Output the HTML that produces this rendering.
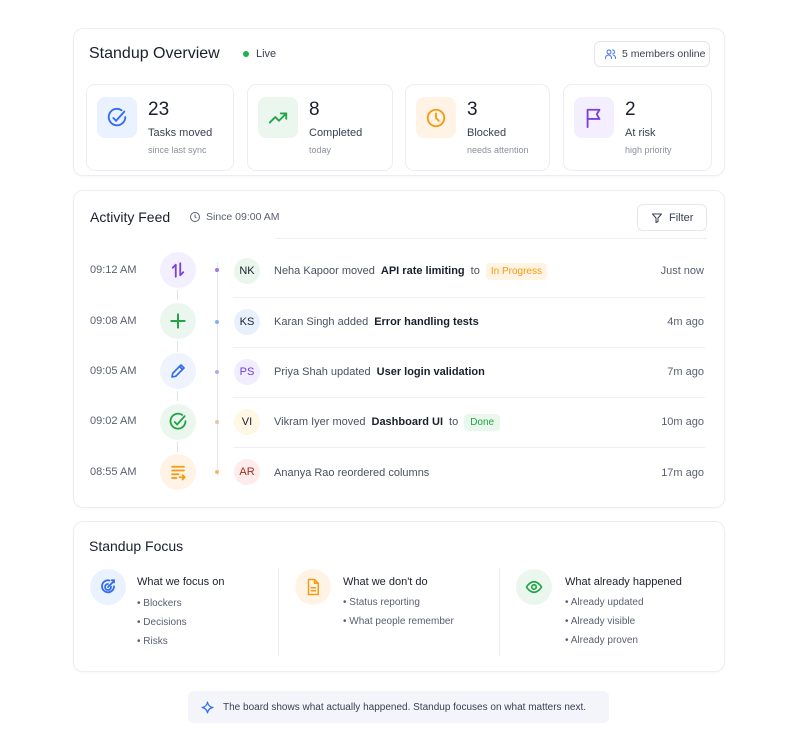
<!DOCTYPE html>
<html><head><meta charset="utf-8"><style>
*{box-sizing:border-box;margin:0;padding:0}
body{width:800px;height:751px;background:#fff;font-family:"Liberation Sans",sans-serif;color:#1f2433;position:relative;overflow:hidden}
.a{position:absolute}
.card{position:absolute;border:1px solid #eceef3;border-radius:10px;background:#fff;box-shadow:0 1px 2px rgba(20,30,60,.03)}
.stat{position:absolute;top:84px;height:87px;border:1px solid #eceef3;border-radius:9px}
.ib{position:absolute;left:10px;top:12px;width:40px;height:41px;border-radius:8px;display:flex;align-items:center;justify-content:center}
.num{position:absolute;left:61px;top:14px;font-size:19px;color:#1a1f2c}
.lbl{position:absolute;left:61px;top:42px;font-size:11px;color:#3a4050}
.sub{position:absolute;left:61px;top:60px;font-size:9px;color:#8a90a0}
.time{position:absolute;left:90px;font-size:11px;color:#5a6070}
.ic{position:absolute;left:160px;width:36px;height:36px;border-radius:50%;display:flex;align-items:center;justify-content:center}
.dot{position:absolute;left:215px;width:4px;height:4px;border-radius:50%}
.av{position:absolute;left:234px;width:26px;height:26px;border-radius:50%;font-size:11px;display:flex;align-items:center;justify-content:center}
.tx{position:absolute;left:274px;font-size:11px;color:#4a5060;white-space:nowrap;display:flex;align-items:center;gap:6px;height:20px}
.tx b{color:#1a1f2c;font-weight:bold}
.rt{position:absolute;right:96px;font-size:11px;color:#5a6070}
.sep{position:absolute;left:233px;width:472px;height:1px;background:#eef0f4}
.vl{position:absolute;left:177px;width:1px;height:10px;background:#dfe2e8}
.fh{position:absolute;font-size:11px;color:#1a1f2c}
.fl{position:absolute;font-size:10px;color:#5a6070}
.fi{position:absolute;width:36px;height:36px;border-radius:50%;display:flex;align-items:center;justify-content:center}
</style></head><body>

<div class="card" style="left:73px;top:28px;width:652px;height:148px"></div>
<div class="a" style="left:89px;top:45px;font-size:16px;color:#1a1f2c">Standup Overview</div>
<div class="a" style="left:243px;top:51px;width:6px;height:6px;border-radius:50%;background:#22b04b"></div>
<div class="a" style="left:256px;top:48px;font-size:11px;color:#3a4050">Live</div>
<div class="a" style="left:594px;top:41px;width:116px;height:26px;border:1px solid #e3e6ec;border-radius:6px;font-size:10.5px;color:#3a4050;display:flex;align-items:center;gap:5px;padding-left:9px">
<svg width="13" height="12" viewBox="0 0 24 24" fill="none" stroke="#3b6ff5" stroke-width="2" stroke-linecap="round"><circle cx="9" cy="8" r="4"/><path d="M2 21v-1a6 6 0 0 1 12 0v1M16 4a4 4 0 0 1 0 8M22 21v-1a6 6 0 0 0-4-5.6"/></svg>5 members online</div>

<div class="stat" style="left:86px;width:148px"><div class="ib" style="background:#eaf1ff"><svg width="22" height="22" viewBox="0 0 24 24" fill="none" stroke="#2f6cf0" stroke-width="2" stroke-linecap="round"><path d="M21 11a9 9 0 1 1-4-7.5"/><path d="M8 12l3 3 9-10"/></svg></div><div class="num">23</div><div class="lbl">Tasks moved</div><div class="sub">since last sync</div></div>
<div class="stat" style="left:247px;width:146px"><div class="ib" style="background:#ebf7ee"><svg width="22" height="22" viewBox="0 0 24 24" fill="none" stroke="#22a447" stroke-width="2" stroke-linecap="round" stroke-linejoin="round"><path d="M3 17l6-6 4 4 8-8"/><path d="M15 7h6v6"/></svg></div><div class="num">8</div><div class="lbl">Completed</div><div class="sub">today</div></div>
<div class="stat" style="left:405px;width:145px"><div class="ib" style="background:#fff3e6"><svg width="22" height="22" viewBox="0 0 24 24" fill="none" stroke="#f59a12" stroke-width="2" stroke-linecap="round"><circle cx="12" cy="12" r="9"/><path d="M12 7v5l3 3"/></svg></div><div class="num">3</div><div class="lbl">Blocked</div><div class="sub">needs attention</div></div>
<div class="stat" style="left:563px;width:149px"><div class="ib" style="background:#f4effe"><svg width="22" height="22" viewBox="0 0 24 24" fill="none" stroke="#7a3fe0" stroke-width="2" stroke-linejoin="round" stroke-linecap="round"><path d="M5 22V3h13l-3 5 3 5H5"/></svg></div><div class="num">2</div><div class="lbl">At risk</div><div class="sub">high priority</div></div>

<div class="card" style="left:73px;top:190px;width:652px;height:318px"></div>
<div class="a" style="left:90px;top:209px;font-size:14px;color:#1a1f2c">Activity Feed</div>
<svg class="a" style="left:189px;top:211px" width="12" height="12" viewBox="0 0 24 24" fill="none" stroke="#5a6070" stroke-width="2"><circle cx="12" cy="12" r="9"/><path d="M12 7v5l3 2"/></svg>
<div class="a" style="left:206px;top:211px;font-size:10.5px;color:#5a6070">Since 09:00 AM</div>
<div class="a" style="left:637px;top:204px;width:70px;height:27px;border:1px solid #e3e6ec;border-radius:6px;font-size:11px;color:#3a4050;display:flex;align-items:center;gap:6px;padding-left:13px">
<svg width="12" height="12" viewBox="0 0 24 24" fill="none" stroke="#3a4050" stroke-width="2" stroke-linejoin="round"><path d="M3 4h18l-7 8v7l-4 2v-9z"/></svg>Filter</div>
<div class="a" style="left:275px;top:238px;width:432px;height:1px;background:#eef0f4"></div>
<div class="a" style="left:217px;top:262px;width:1px;height:214px;background:#e6e8ee"></div>

<div class="time" style="top:264px">09:12 AM</div>
<div class="ic" style="top:252px;background:#f3effe"><svg width="18" height="18" viewBox="0 0 24 24" fill="none" stroke="#7a3fe0" stroke-width="2.4" stroke-linecap="round" stroke-linejoin="round"><path d="M9 21V5M5 9l4-4M15 3v16M19 15l-4 4"/></svg></div>
<div class="vl" style="top:290px"></div>
<div class="dot" style="top:268px;background:#9b7be8"></div>
<div class="av" style="top:258px;background:#e8f6ec;color:#1a1f2c">NK</div>
<div class="tx" style="top:261px">Neha Kapoor moved <b>API rate limiting</b> to <span style="background:#fff3e3;color:#f59a12;padding:3px 5px;border-radius:4px;font-size:10px">In Progress</span></div>
<div class="rt" style="top:265px">Just now</div>
<div class="sep" style="top:297px"></div>

<div class="time" style="top:315px">09:08 AM</div>
<div class="ic" style="top:303px;background:#ebf7ee"><svg width="20" height="20" viewBox="0 0 24 24" fill="none" stroke="#22a447" stroke-width="2.4" stroke-linecap="round"><path d="M12 4v16M4 12h16"/></svg></div>
<div class="vl" style="top:341px"></div>
<div class="dot" style="top:320px;background:#8aaef0"></div>
<div class="av" style="top:309px;background:#e9f0fd;color:#1a1f2c">KS</div>
<div class="tx" style="top:312px">Karan Singh added <b>Error handling tests</b></div>
<div class="rt" style="top:316px">4m ago</div>
<div class="sep" style="top:347px"></div>

<div class="time" style="top:365px">09:05 AM</div>
<div class="ic" style="top:353px;background:#eef3fd"><svg width="18" height="18" viewBox="0 0 24 24" fill="none" stroke="#2f6cf0" stroke-width="2.2" stroke-linejoin="round"><path d="M4 20l1-5L16 4l4 4L9 19z M14 6l4 4"/></svg></div>
<div class="vl" style="top:391px"></div>
<div class="dot" style="top:370px;background:#b9a6ee"></div>
<div class="av" style="top:359px;background:#f1edfd;color:#6a3fd0">PS</div>
<div class="tx" style="top:362px">Priya Shah updated <b>User login validation</b></div>
<div class="rt" style="top:366px">7m ago</div>
<div class="sep" style="top:397px"></div>

<div class="time" style="top:415px">09:02 AM</div>
<div class="ic" style="top:404px;background:#ebf7ee"><svg width="20" height="20" viewBox="0 0 24 24" fill="none" stroke="#22a447" stroke-width="2.2" stroke-linecap="round"><path d="M21 11a9 9 0 1 1-4-7.5"/><path d="M8 12l3 3 9-10"/></svg></div>
<div class="vl" style="top:442px"></div>
<div class="dot" style="top:420px;background:#e0c9a6"></div>
<div class="av" style="top:409px;background:#fdf7e3;color:#1a1f2c">VI</div>
<div class="tx" style="top:412px">Vikram Iyer moved <b>Dashboard UI</b> to <span style="background:#e9f7ed;color:#22a447;padding:3px 6px;border-radius:4px;font-size:10px">Done</span></div>
<div class="rt" style="top:416px">10m ago</div>
<div class="sep" style="top:447px"></div>

<div class="time" style="top:466px">08:55 AM</div>
<div class="ic" style="top:454px;background:#fff3e6"><svg width="18" height="18" viewBox="0 0 24 24" fill="none" stroke="#f59a12" stroke-width="2.2" stroke-linecap="round"><path d="M4 5h16M4 10h16M4 15h9M4 20h6M14 19h7M18 16l3 3-3 3"/></svg></div>
<div class="dot" style="top:470px;background:#f4b870"></div>
<div class="av" style="top:459px;background:#fdeceb;color:#a02a20">AR</div>
<div class="tx" style="top:463px">Ananya Rao reordered columns</div>
<div class="rt" style="top:467px">17m ago</div>

<div class="card" style="left:73px;top:521px;width:652px;height:151px"></div>
<div class="a" style="left:89px;top:538px;font-size:14px;color:#1a1f2c">Standup Focus</div>
<div class="a" style="left:278px;top:568px;width:1px;height:88px;background:#eceef3"></div>
<div class="a" style="left:499px;top:568px;width:1px;height:88px;background:#eceef3"></div>

<div class="fi" style="left:90px;top:569px;background:#eaf1ff"><svg width="18" height="18" viewBox="0 0 24 24" fill="none" stroke="#2f6cf0" stroke-width="2.4" stroke-linecap="round"><path d="M20 11a8 8 0 1 1-6-7.7"/><path d="M16 11.5a4 4 0 1 1-4-3.5"/><path d="M12 12l8-8M17 3h3v3"/></svg></div>
<div class="fh" style="left:137px;top:576px">What we focus on</div>
<div class="fl" style="left:137px;top:598px">• Blockers</div>
<div class="fl" style="left:137px;top:617px">• Decisions</div>
<div class="fl" style="left:137px;top:636px">• Risks</div>

<div class="fi" style="left:295px;top:569px;background:#fff3e6"><svg width="18" height="18" viewBox="0 0 24 24" fill="none" stroke="#f59a12" stroke-width="2" stroke-linejoin="round"><path d="M6 2h8l5 5v15H6z M14 2v5h5 M9 13h7M9 17h7"/></svg></div>
<div class="fh" style="left:343px;top:576px">What we don't do</div>
<div class="fl" style="left:343px;top:597px">• Status reporting</div>
<div class="fl" style="left:343px;top:616px">• What people remember</div>

<div class="fi" style="left:516px;top:569px;background:#ebf7ee"><svg width="20" height="18" viewBox="0 0 24 24" fill="none" stroke="#22a447" stroke-width="2.2"><path d="M2 12s4-7 10-7 10 7 10 7-4 7-10 7S2 12 2 12z"/><circle cx="12" cy="12" r="3"/></svg></div>
<div class="fh" style="left:565px;top:576px">What already happened</div>
<div class="fl" style="left:565px;top:597px">• Already updated</div>
<div class="fl" style="left:565px;top:616px">• Already visible</div>
<div class="fl" style="left:565px;top:635px">• Already proven</div>

<div class="a" style="left:188px;top:691px;width:421px;height:32px;background:#f3f5fb;border-radius:6px;font-size:10px;color:#3a4050;display:flex;align-items:center;gap:9px;padding-left:13px">
<svg width="13" height="13" viewBox="0 0 24 24" fill="none" stroke="#2f6cf0" stroke-width="2.2" stroke-linejoin="round"><path d="M12 2c1 6 4 9 10 10-6 1-9 4-10 10-1-6-4-9-10-10 6-1 9-4 10-10z"/></svg>The board shows what actually happened. Standup focuses on what matters next.</div>
</body></html>
